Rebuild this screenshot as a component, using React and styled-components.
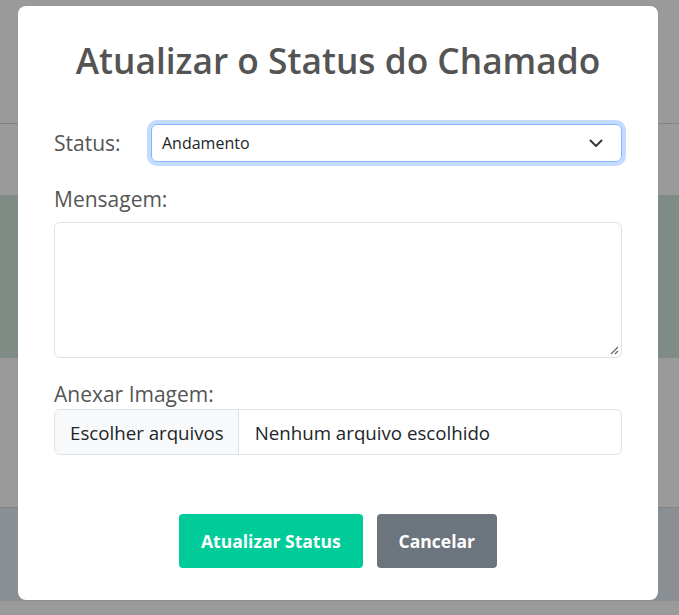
import styled, { createGlobalStyle } from "styled-components";

const GlobalStyle = createGlobalStyle`
  body {
    margin: 0;
    background: #9a9a9a;
    font-family: "Open Sans", "Noto Sans", sans-serif;
  }
`;

//page behind the dimmed overlay
const Page = styled.div`
  display: flex;
  flex-direction: column;
  height: 615px;
  overflow: hidden;
`;

const Band = styled.div`
  height: ${(p) => p.h}px;
  background: ${(p) => p.bg};
  border-bottom: ${(p) => (p.line ? "1px solid #828282" : "none")};
  flex-shrink: 0;
`;

const Modal = styled.div`
  position: fixed;
  top: 6px;
  left: 18px;
  width: 640px;
  box-sizing: border-box;
  background: #fff;
  border-radius: 8px;
  padding: 32px 36px 32px 36px;
`;

const Title = styled.h2`
  margin: 0 0 42px;
  text-align: center;
  font-size: 35.3px;
  font-weight: 600;
  line-height: 44px;
  color: #545454;
`;

const StatusRow = styled.div`
  display: flex;
  align-items: center;
`;

const Label = styled.label`
  display: block;
  font-size: 21px;
  line-height: 24px;
  color: #555;
  width: ${(p) => (p.inline ? "97px" : "auto")};
  margin: ${(p) => p.m || "0"};
`;

const SelectBox = styled.div`
  flex: 1;
  height: 38px;
  box-sizing: border-box;
  border: 1px solid #86b7fe;
  border-radius: 6px;
  box-shadow: 0 0 0 4px rgba(13, 110, 253, 0.25);
  display: flex;
  align-items: center;
  justify-content: space-between;
  padding: 0 18px 0 10px;
  font-size: 16px;
  color: #212529;
`;

const TextArea = styled.div`
  position: relative;
  height: 136px;
  box-sizing: border-box;
  border: 1px solid #dee2e6;
  border-radius: 6px;
`;

const Grip = styled.svg`
  position: absolute;
  right: 2px;
  bottom: 2px;
`;

const FileInput = styled.div`
  display: flex;
  height: 46px;
  box-sizing: border-box;
  border: 1px solid #dee2e6;
  border-radius: 6px;
  overflow: hidden;
  font-size: 18.7px;
  color: #212529;
`;

const FileButton = styled.div`
  display: flex;
  align-items: center;
  padding: 0 14px 0 15px;
  background: #f8f9fa;
  border-right: 1px solid #dee2e6;
`;

const FileName = styled.div`
  display: flex;
  align-items: center;
  padding: 0 16px;
`;

const Actions = styled.div`
  display: flex;
  justify-content: center;
  gap: 14px;
  margin-top: 59px;
`;

const Button = styled.button`
  height: 54px;
  padding: 0 ${(p) => p.px}px;
  border: none;
  border-radius: 4px;
  background: ${(p) => p.bg};
  color: #fff;
  font-family: inherit;
  font-size: 17.5px;
  font-weight: 700;
  cursor: pointer;
`;

const App = () => {
  return (
    <>
      <GlobalStyle />
      <Page>
        <Band h={123} bg="#9a9a9a" line />
        <Band h={71} bg="#9a9a9a" />
        <Band h={163} bg="#7f8c86" />
        <Band h={149} bg="#9a9a9a" line />
        <Band h={93} bg="#8a8f93" />
        <Band h={20} bg="#9a9a9a" />
      </Page>
      <Modal>
        <Title>Atualizar o Status do Chamado</Title>
        <StatusRow>
          <Label inline>Status:</Label>
          <SelectBox>
            <span>Andamento</span>
            <svg width="14" height="10" viewBox="0 0 14 10">
              <path d="M1.5 2.5 L7 8 L12.5 2.5" fill="none" stroke="#343a40" strokeWidth="2" strokeLinecap="round" strokeLinejoin="round" />
            </svg>
          </SelectBox>
        </StatusRow>
        <Label m="25px 0 11px">Mensagem:</Label>
        <TextArea>
          <Grip width="9" height="9" viewBox="0 0 9 9">
            <path d="M8 1 L1 8 M8 5 L5 8" stroke="#666" strokeWidth="1.2" />
          </Grip>
        </TextArea>
        <Label m="24px 0 3px">Anexar Imagem:</Label>
        <FileInput>
          <FileButton>Escolher arquivos</FileButton>
          <FileName>Nenhum arquivo escolhido</FileName>
        </FileInput>
        <Actions>
          <Button bg="#00cc99" px={22}>Atualizar Status</Button>
          <Button bg="#6c757d" px={22}>Cancelar</Button>
        </Actions>
      </Modal>
    </>
  );
};

export default App;
